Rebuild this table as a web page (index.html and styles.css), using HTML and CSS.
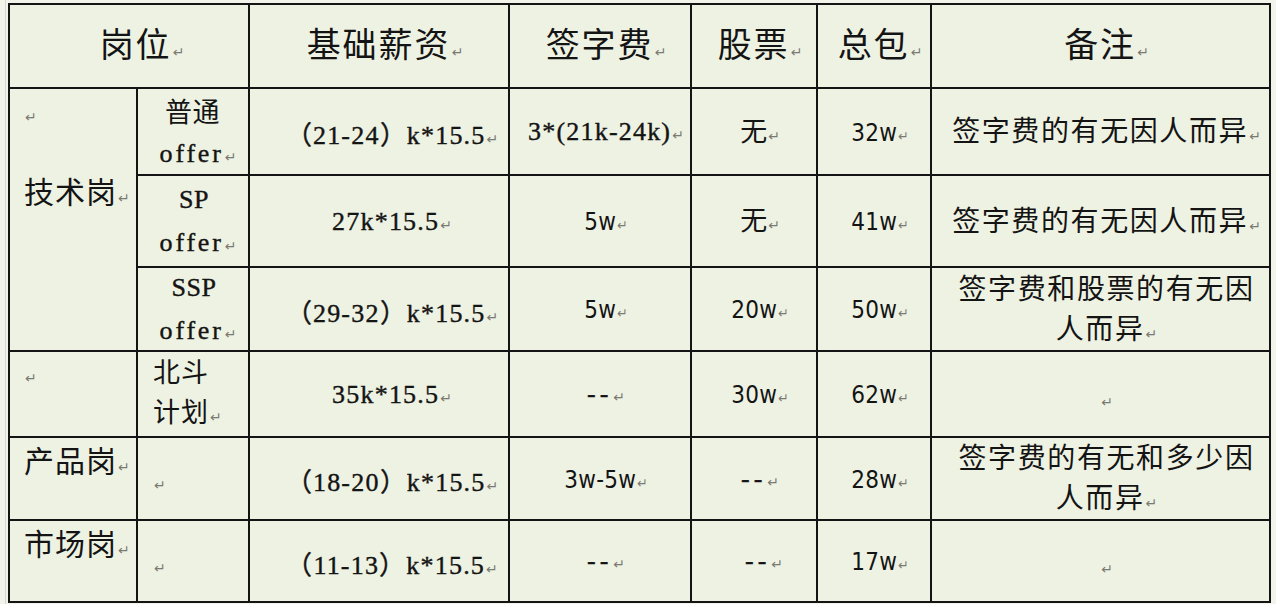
FILE: index.html
```html
<!DOCTYPE html>
<html lang="zh-CN">
<head>
<meta charset="utf-8">
<title>岗位薪资</title>
<link rel="stylesheet" href="styles.css">
</head>
<body>
<div class="page">
  <div class="sheet">
    <div class="c h span2"><div class="t">岗位<span class="pm">↵</span></div></div>
    <div class="c h"><div class="t">基础薪资<span class="pm">↵</span></div></div>
    <div class="c h"><div class="t">签字费<span class="pm">↵</span></div></div>
    <div class="c h"><div class="t">股票<span class="pm">↵</span></div></div>
    <div class="c h"><div class="t">总包<span class="pm">↵</span></div></div>
    <div class="c h"><div class="t">备注<span class="pm">↵</span></div></div>

    <div class="c lead tech">
      <div class="pmline"><span class="pm">↵</span></div>
      <div class="role tech-name">技术岗<span class="pm">↵</span></div>
    </div>
    <div class="c sub"><div class="zh">普通</div><div class="mono word">offer<span class="pm">↵</span></div></div>
    <div class="c mono base"><div class="t">（21-24）k*15.5<span class="pm">↵</span></div></div>
    <div class="c mono"><div class="t">3*(21k-24k)<span class="pm">↵</span></div></div>
    <div class="c zhv"><div class="t">无<span class="pm">↵</span></div></div>
    <div class="c num"><div class="t">32w<span class="pm">↵</span></div></div>
    <div class="c note"><div class="t">签字费的有无因人而异<span class="pm">↵</span></div></div>

    <div class="c sub"><div class="mono code">SP</div><div class="mono word">offer<span class="pm">↵</span></div></div>
    <div class="c mono base"><div class="t">27k*15.5<span class="pm">↵</span></div></div>
    <div class="c num"><div class="t">5w<span class="pm">↵</span></div></div>
    <div class="c zhv"><div class="t">无<span class="pm">↵</span></div></div>
    <div class="c num"><div class="t">41w<span class="pm">↵</span></div></div>
    <div class="c note"><div class="t">签字费的有无因人而异<span class="pm">↵</span></div></div>

    <div class="c sub"><div class="mono code">SSP</div><div class="mono word">offer<span class="pm">↵</span></div></div>
    <div class="c mono base"><div class="t">（29-32）k*15.5<span class="pm">↵</span></div></div>
    <div class="c num"><div class="t">5w<span class="pm">↵</span></div></div>
    <div class="c num"><div class="t">20w<span class="pm">↵</span></div></div>
    <div class="c num"><div class="t">50w<span class="pm">↵</span></div></div>
    <div class="c note"><div class="ln">签字费和股票的有无因</div><div class="ln">人而异<span class="pm">↵</span></div></div>

    <div class="c lead blank"><div class="pmline"><span class="pm">↵</span></div></div>
    <div class="c left"><div class="beidou"><div class="ln">北斗</div><div class="ln">计划<span class="pm">↵</span></div></div></div>
    <div class="c mono base"><div class="t">35k*15.5<span class="pm">↵</span></div></div>
    <div class="c mono"><div class="t dash">--<span class="pm">↵</span></div></div>
    <div class="c num"><div class="t">30w<span class="pm">↵</span></div></div>
    <div class="c num"><div class="t">62w<span class="pm">↵</span></div></div>
    <div class="c note"><div class="t empty"><span class="pm">↵</span></div></div>

    <div class="c lead"><div class="role">产品岗<span class="pm">↵</span></div></div>
    <div class="c left"><div class="t empty"><span class="pm">↵</span></div></div>
    <div class="c mono base"><div class="t">（18-20）k*15.5<span class="pm">↵</span></div></div>
    <div class="c num"><div class="t">3w-5w<span class="pm">↵</span></div></div>
    <div class="c mono"><div class="t dash">--<span class="pm">↵</span></div></div>
    <div class="c num"><div class="t">28w<span class="pm">↵</span></div></div>
    <div class="c note"><div class="ln">签字费的有无和多少因</div><div class="ln">人而异<span class="pm">↵</span></div></div>

    <div class="c lead"><div class="role">市场岗<span class="pm">↵</span></div></div>
    <div class="c left"><div class="t empty"><span class="pm">↵</span></div></div>
    <div class="c mono base"><div class="t">（11-13）k*15.5<span class="pm">↵</span></div></div>
    <div class="c mono"><div class="t dash">--<span class="pm">↵</span></div></div>
    <div class="c mono shift"><div class="t dash">--<span class="pm">↵</span></div></div>
    <div class="c num"><div class="t">17w<span class="pm">↵</span></div></div>
    <div class="c note"><div class="t empty"><span class="pm">↵</span></div></div>
  </div>
</div>
</body>
</html>
```

FILE: styles.css
```css
html, body {
  margin: 0;
  padding: 0;
  background: #f2f4ec;
}

.page {
  margin-left: 5px;
  padding: 3px 0 0 2px;
  border-left: 1px solid #d6d8cf;
  min-height: 604px;
  box-sizing: border-box;
}

.sheet {
  display: grid;
  width: max-content;
  grid-template-columns: 126px 110px 258px 180px 124px 112px 337px;
  grid-template-rows: 82px 85px 90px 82px 84px 81px 80px;
  gap: 2px;
  padding: 2px;
  background: #141414;
  color: #141414;
  font-family: "Noto Sans CJK SC", "Noto Sans", sans-serif;
}

.c {
  background: #eef2e3;
  display: flex;
  flex-direction: column;
  align-items: center;
  justify-content: center;
  text-align: center;
  min-width: 0;
  padding-left: 12px;
}

.pm {
  font-family: "DejaVu Sans", sans-serif;
  font-size: 14px;
  color: #7a7a72;
  letter-spacing: 0;
  -webkit-text-stroke: 0;
  font-weight: normal;
  margin-left: 1px;
}

.h {
  font-size: 34px;
  letter-spacing: 2px;
  line-height: 40px;
  padding-top: 3px;
}

.span2 {
  grid-column: span 2;
  padding-left: 26px;
}

.lead {
  align-items: flex-start;
  justify-content: flex-start;
  text-align: left;
  padding-left: 14px;
}

.tech {
  grid-row: span 3;
  padding-top: 14px;
}

.blank {
  padding-top: 12px;
}

.pmline {
  line-height: 24px;
  height: 24px;
}

.role {
  font-size: 30px;
  letter-spacing: 1px;
  line-height: 40px;
  padding-top: 1px;
}

.tech-name {
  margin-top: 43px;
  padding-top: 0;
}

.sub {
  line-height: 43px;
  padding-top: 4px;
  padding-left: 10px;
}

.zh {
  font-size: 27px;
  letter-spacing: 0.5px;
  margin-right: 11px;
}

.mono {
  font-family: "Liberation Serif", "DejaVu Serif", serif;
  font-size: 26px;
  letter-spacing: 1.2px;
  -webkit-text-stroke: 0.4px #141414;
}

.word {
  letter-spacing: 2.8px;
}

.code {
  letter-spacing: 0.5px;
  margin-right: 8px;
}

.dash {
  letter-spacing: 4px;
}

.sub .mono {
  line-height: 43px;
}

.base {
  padding-left: 26px;
  padding-top: 2px;
}

.shift {
  padding-left: 20px;
}

.zhv {
  font-size: 27px;
  line-height: 40px;
  padding-top: 2px;
}

.num {
  font-family: "Liberation Sans Narrow", "DejaVu Sans Condensed", "Liberation Sans", sans-serif;
  font-stretch: condensed;
  font-size: 24px;
  letter-spacing: 0.3px;
  padding-top: 2px;
}

.note {
  font-size: 28px;
  letter-spacing: 1.6px;
  line-height: 40px;
  padding: 2px 4px 0 16px;
}

.ln {
  display: block;
  white-space: nowrap;
}

.left {
  align-items: flex-start;
  text-align: left;
  padding-left: 15px;
}

.beidou {
  font-size: 27px;
  letter-spacing: 1px;
  line-height: 40px;
}

.empty {
  font-size: 28px;
  line-height: 40px;
  padding-top: 6px;
}
```
